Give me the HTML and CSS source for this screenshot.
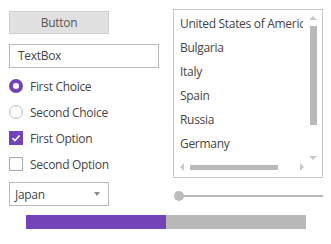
FILE: index.html
```html
<!DOCTYPE html>
<html>
<head>
    <title>Controls</title>
    <link rel="stylesheet" href="styles.css">
</head>
<body>
    <div class="page">
        <div class="top">
            <div class="left">
                <button type="button" class="btn">Button</button>
                <div class="textbox">TextBox</div>
                <div class="row"><span class="radio checked"></span>First Choice</div>
                <div class="row"><span class="radio"></span>Second Choice</div>
                <div class="row"><span class="check checked">
                    <svg width="10" height="10" viewBox="0 0 10 10"><path d="M1.5 5.2 L4 7.5 L8.5 2.5" fill="none" stroke="#fff" stroke-width="1.6"/></svg>
                </span>First Option</div>
                <div class="row"><span class="check"></span>Second Option</div>
                <div class="dropdown">Japan<span class="caret"></span></div>
            </div>
            <div class="right">
                <div class="listbox">
                    <ul>
                        <li>United States of America</li>
                        <li>Bulgaria</li>
                        <li>Italy</li>
                        <li>Spain</li>
                        <li>Russia</li>
                        <li>Germany</li>
                    </ul>
                    <div class="vscroll">
                        <span class="arrow up"></span>
                        <span class="vthumb"></span>
                        <span class="arrow down"></span>
                    </div>
                    <div class="hscroll">
                        <span class="arrow left"></span>
                        <span class="hthumb"></span>
                        <span class="arrow right"></span>
                    </div>
                </div>
                <div class="slider">
                    <span class="knob"></span>
                    <span class="track"></span>
                </div>
            </div>
        </div>
        <div class="progress">
            <div class="bar" style="width: 50%"></div>
        </div>
    </div>
</body>
</html>
```

FILE: styles.css
```css
* {
    margin: 0;
    padding: 0;
    box-sizing: border-box;
}

body {
    background: #fff;
    font-family: "Open Sans", sans-serif;
    font-size: 12px;
    letter-spacing: -0.3px;
    color: #454545;
}

.page {
    padding: 9px 0 0 9px;
}

.top {
    display: flex;
}

.left {
    width: 150px;
    display: flex;
    flex-direction: column;
}

.btn {
    margin-top: 2px;
    width: 100px;
    height: 23px;
    background: #e1e1e1;
    border: 1px solid #d0d0d0;
    font-family: "Open Sans", sans-serif;
    font-size: 12px;
    letter-spacing: -0.3px;
    color: #555;
}

.textbox {
    margin-top: 10px;
    height: 24px;
    border: 1px solid #b9b9b9;
    padding-left: 8px;
    line-height: 22px;
}

.row {
    height: 26px;
    display: flex;
    align-items: center;
    gap: 7px;
}
.textbox + .row {
    margin-top: 5px;
}

.radio {
    width: 14px;
    height: 14px;
    border-radius: 50%;
    border: 1px solid #bdbdbd;
}
.radio.checked {
    border: 4px solid #7443b8;
}

.check {
    width: 14px;
    height: 14px;
    border: 1px solid #a9a9a9;
    display: flex;
    align-items: center;
    justify-content: center;
}
.check.checked {
    background: #7443b8;
    border-color: #7443b8;
}

.dropdown {
    margin-top: 5px;
    width: 100px;
    height: 24px;
    border: 1px solid #b9b9b9;
    padding: 0 8px 0 5px;
    display: flex;
    align-items: center;
    justify-content: space-between;
}
.caret {
    border-left: 3.5px solid transparent;
    border-right: 3.5px solid transparent;
    border-top: 4px solid #8a8a8a;
}

.right {
    margin-left: 14px;
    width: 150px;
}

.listbox {
    position: relative;
    height: 169px;
    border: 1px solid #c6c6c6;
    overflow: hidden;
}
.listbox ul {
    list-style: none;
    padding-top: 2px;
    width: 123px;
    margin-left: 6px;
    overflow: hidden;
    white-space: nowrap;
}
.listbox li {
    height: 24px;
    line-height: 24px;
}

.vscroll {
    position: absolute;
    top: 6px;
    right: 5px;
    width: 8px;
    height: 144px;
    display: flex;
    flex-direction: column;
    align-items: center;
}
.vthumb {
    margin-top: 6px;
    width: 7px;
    height: 99px;
    background: #b9b9b9;
}
.hscroll {
    position: absolute;
    left: 6px;
    bottom: 6px;
    width: 124px;
    height: 8px;
    display: flex;
    align-items: center;
}
.hthumb {
    margin-left: 6px;
    width: 88px;
    height: 5px;
    background: #b9b9b9;
}

.arrow {
    width: 0;
    height: 0;
    border: 4px solid transparent;
}
.arrow.up {
    border-bottom: 4px solid #c9c9c9;
    border-top-width: 0;
}
.arrow.down {
    margin-top: auto;
    border-top: 4px solid #c9c9c9;
    border-bottom-width: 0;
}
.arrow.left {
    border-right: 4px solid #c9c9c9;
    border-left-width: 0;
}
.arrow.right {
    margin-left: auto;
    border-left: 4px solid #c9c9c9;
    border-right-width: 0;
}

.slider {
    margin-top: 13px;
    display: flex;
    align-items: center;
    height: 10px;
}
.knob {
    width: 10px;
    height: 10px;
    border-radius: 50%;
    background: #bdbdbd;
    margin-left: 1px;
}
.track {
    flex: 1;
    height: 2px;
    background: #b9b9b9;
}

.progress {
    margin: 9px 0 0 17px;
    width: 280px;
    height: 14px;
    background: #b9b9b9;
}
.bar {
    height: 100%;
    background: #7443b8;
}
```
